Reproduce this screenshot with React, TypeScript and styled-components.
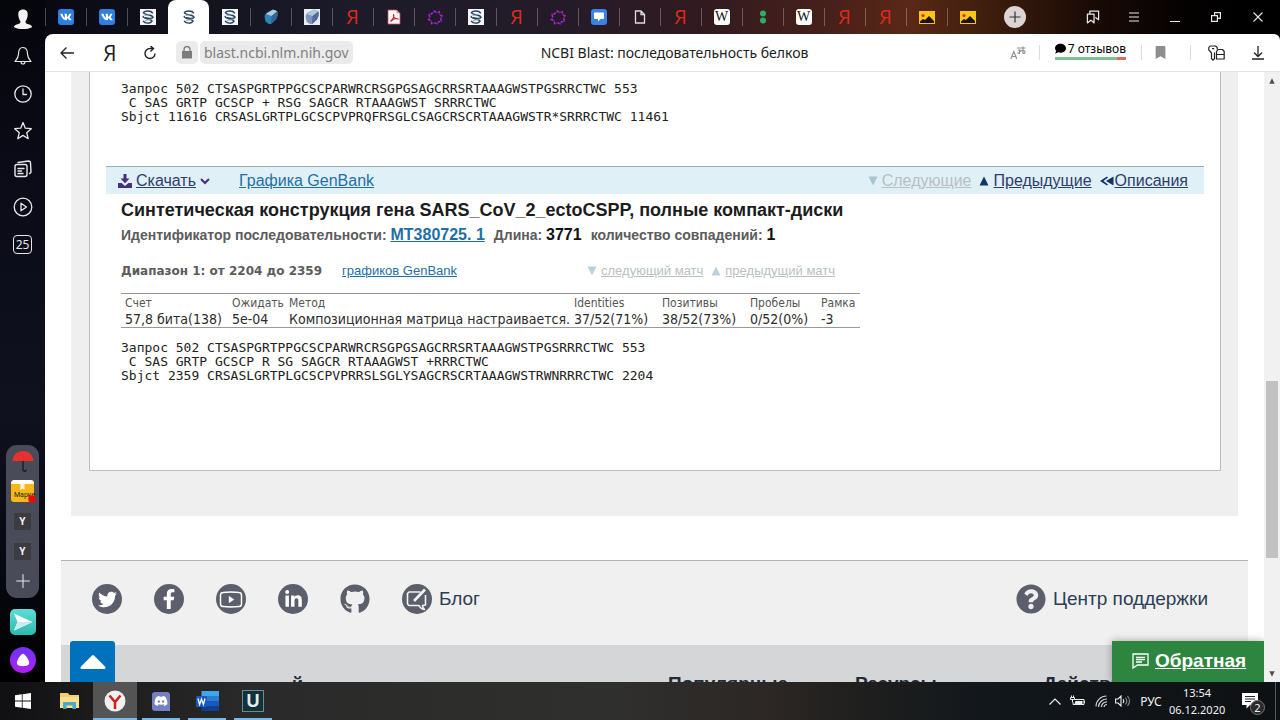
import React from 'react';
import styled, { createGlobalStyle, css } from 'styled-components';
import {
  FaTwitter,
  FaFacebookF,
  FaLinkedinIn,
  FaGithub,
  FaQuestionCircle,
  FaDiscord,
  FaVk,
  FaBookmark,
  FaComment,
} from 'react-icons/fa';

const ui = '"Noto Sans", "Open Sans", sans-serif';
const arial = '"Liberation Sans", Arial, sans-serif';
const verdana = '"DejaVu Sans", Verdana, sans-serif';
const tahoma = '"DejaVu Sans Condensed", Tahoma, sans-serif';
const narrow = '"Liberation Sans Narrow", "Arial Narrow", "Open Sans", sans-serif';

const GlobalStyle = createGlobalStyle`
  * { box-sizing: border-box; }
  body { margin: 0; background: #000; }
  button { border: 0; padding: 0; margin: 0; background: none; color: inherit; font: inherit; }
  svg { display: block; flex: none; }
`;

/* ---------- shell ---------- */

const Desktop = styled.div`
  height: 100vh;
  display: flex;
  flex-direction: column;
  overflow: hidden;
  font-family: ${ui};
`;

const Browser = styled.div`
  flex: 1;
  min-height: 0;
  display: flex;
  background: linear-gradient(90deg, #05050d 0%, #0d0d18 8%, #1c1b2a 27%, #241b28 44%, #301a20 54%, #48201a 65%, #5a2817 71%, #43200f 76%, #1b0b06 85%, #030101 93%, #000 100%);
`;

const Sidebar = styled.aside`
  width: 45px;
  flex: none;
  display: flex;
  flex-direction: column;
  align-items: center;
  color: #e8e8ec;
  background: linear-gradient(180deg, #05050c 0%, #0b0c18 30%, #10111f 60%, #080912 82%, #000 100%);
`;

const SideButton = styled.button`
  width: 44px;
  height: 37px;
  display: grid;
  place-items: center;
`;

const SideList = styled.nav`
  height: 226px;
  display: flex;
  flex-direction: column;
  ${SideButton} { flex: 1; height: auto; }
`;

const Dock = styled.div`
  width: 33px;
  margin-top: auto;
  padding: 1px 0 2px;
  border-radius: 11px;
  background: #4a4b58;
  display: flex;
  flex-direction: column;
  align-items: center;
  ${SideButton} { width: 33px; height: 30px; }
`;

const YTile = styled.span`
  width: 17px;
  height: 17px;
  display: grid;
  place-items: center;
  background: #3b3b40;
  color: #eee;
  font: bold 10px/17px ${ui};
`;

const AppTile = styled.button<{ $round?: boolean }>`
  width: 26px;
  height: 26px;
  margin: ${p => (p.$round ? '0 0 9px' : '11px 0 12px')};
  border-radius: ${p => (p.$round ? '50%' : '5px')};
  background: ${p => (p.$round ? 'linear-gradient(180deg, #6a35f5, #b31ff0)' : 'linear-gradient(180deg, #5cdcd8, #2fb9ae)')};
  display: grid;
  place-items: center;
`;

const Main = styled.div`
  flex: 1;
  min-width: 0;
  display: flex;
  flex-direction: column;
`;

/* ---------- tabs ---------- */

const TabStrip = styled.div`
  height: 34px;
  display: flex;
  align-items: flex-end;
`;

const Tab = styled.button<{ $active?: boolean; $bare?: boolean }>`
  flex: 0 1 41px;
  height: 34px;
  display: grid;
  place-items: center;
  position: relative;
  ${p =>
    p.$active
      ? css`background: #fff; border-radius: 8px 8px 0 0;`
      : !p.$bare &&
        css`
          &::before {
            content: '';
            position: absolute;
            left: 0;
            top: 8px;
            width: 1px;
            height: 18px;
            background: #ffffff44;
          }
        `}
`;

const Favicon = styled.span<{ $bg?: string; $square?: boolean }>`
  width: 16px;
  height: 16px;
  border-radius: ${p => (p.$bg && !p.$square ? '3px' : 0)};
  background: ${p => p.$bg || 'transparent'};
  color: #fff;
  display: grid;
  place-items: center;
`;

const YaGlyph = styled.span`
  color: #dc2b1e;
  font: 20px/20px ${narrow};
`;

const WikiGlyph = styled.span`
  color: #111;
  font: 14px/16px "Liberation Serif", serif;
`;

const NewTab = styled.button`
  width: 22px;
  height: 22px;
  margin: 0 auto 6px 16px;
  border-radius: 50%;
  background: #ddd5d3;
  display: grid;
  place-items: center;
`;

const WindowButtons = styled.div`
  height: 34px;
  display: flex;
  align-items: center;
  color: #e8e8e8;
`;

const WindowButton = styled.button<{ $w?: number }>`
  width: ${p => p.$w || 41}px;
  height: 34px;
  display: grid;
  place-items: center;
`;

/* ---------- address bar ---------- */

const AddressBar = styled.header`
  height: 38px;
  display: grid;
  grid-template-columns: 1fr auto 1fr;
  align-items: center;
  background: #fff;
  border-bottom: 1px solid #e4e4e4;
  border-radius: 8px 6px 0 0;
  color: #222;
`;

const AddressGroup = styled.div<{ $end?: boolean }>`
  display: flex;
  align-items: center;
  justify-content: ${p => (p.$end ? 'flex-end' : 'flex-start')};
`;

const ToolButton = styled.button<{ $w?: number }>`
  width: ${p => p.$w || 42}px;
  height: 30px;
  display: grid;
  place-items: center;
`;

const YaHome = styled.span`
  font: 21px/22px ${narrow};
`;

const Chip = styled.button<{ $text?: boolean }>`
  height: 23px;
  padding: ${p => (p.$text ? '0 4px' : 0)};
  width: ${p => (p.$text ? 'auto' : '22px')};
  margin-left: ${p => (p.$text ? '2px' : '7px')};
  border-radius: 5px;
  background: #ebebeb;
  color: #808080;
  font: 14px/23px ${ui};
  display: grid;
  place-items: center;
`;

const PageTitle = styled.div`
  margin-left: 24px;
  font: 14px/22px ${ui};
  color: #222;
  white-space: nowrap;
`;

const Divider = styled.span`
  width: 1px;
  height: 15px;
  background: #ddd;
`;

const SpacedDivider = styled(Divider)`
  margin: 0 5px 0 12px;
`;

const Reviews = styled.button`
  margin: 0 15px 5px;
  color: #000;
  font: 12px/16px ${ui};
  border-bottom: 3px solid;
  border-image: linear-gradient(90deg, #7fc096 0 86%, #e06a5c 86%) 1;
`;

const ReviewLabel = styled.span`
  display: flex;
  align-items: center;
  gap: 2px;
  height: 16px;
`;

/* ---------- page ---------- */

const Viewport = styled.div`
  flex: 1;
  min-height: 0;
  display: flex;
  background: #fff;
`;

const PageArea = styled.div`
  flex: 1;
  min-width: 0;
  position: relative;
  overflow: hidden;
`;

const Results = styled.main`
  margin: 0 26px 44px;
  padding: 0 17px 45px 18px;
  background: #efefef;
`;

const Sheet = styled.section`
  padding: 10px 16px 87px;
  background: #fff;
  border: 1px solid #bdbdbd;
  border-top: 0;
`;

const Sequence = styled.pre`
  margin: 0 0 0 15px;
  font: 13px/14px "DejaVu Sans Mono", monospace;
  color: #222;
`;

const ActionBar = styled.nav`
  height: 28px;
  margin-top: 42px;
  padding: 0 16px 0 12px;
  display: flex;
  align-items: center;
  border-top: 1px solid #93b0b8;
  background: #e0f0f7;
  font: 16px/20px ${arial};
`;

const Link = styled.a<{ $tone?: 'dark' | 'muted' }>`
  color: ${p => (p.$tone === 'dark' ? '#2f3d6b' : p.$tone === 'muted' ? '#b9bfc2' : '#1f6fa5')};
  text-decoration: underline;
  white-space: nowrap;
`;

const Item = styled.span<{ $gap?: number; $ml?: string }>`
  display: inline-flex;
  align-items: center;
  gap: ${p => p.$gap ?? 4}px;
  margin-left: ${p => p.$ml || '0'};
`;

const Entry = styled.article`
  padding-left: 15px;
`;

const EntryTitle = styled.h2`
  margin: 5px 0 0;
  font: bold 18px/22px ${arial};
  color: #1c1c1c;
`;

const Meta = styled.p`
  margin: 3px 0 0;
  display: flex;
  gap: 9px;
  font: bold 14px/22px ${arial};
  color: #5c5c5c;
  a, b { font-size: 16px; }
  b { color: #111; }
`;

const RangeRow = styled.div`
  height: 20px;
  width: 714px;
  max-width: 100%;
  margin: 15px 0 12px;
  display: flex;
  align-items: center;
  font: 13px/20px ${arial};
`;

const RangeTitle = styled.h3`
  margin: 0 20px 0 0;
  font: bold 12px/20px ${verdana};
  color: #5c5c5c;
`;

const Scores = styled.table`
  width: 739px;
  max-width: 100%;
  margin-bottom: 13px;
  table-layout: fixed;
  border-collapse: separate;
  border-spacing: 0;
  border-top: 1px solid #999;
  border-bottom: 1px solid #999;
  font: 14px/16px ${tahoma};
  color: #2b2b2b;
  white-space: nowrap;
  th { padding: 1px 0 0 4px; text-align: left; font-weight: normal; font-size: 12px; color: #555; }
  td { padding: 0 0 0 4px; }
`;

const Col = styled.col<{ $w: number }>`
  width: ${p => p.$w}px;
`;

/* ---------- footer ---------- */

const Footer = styled.footer`
  margin: 0 16px;
  border-top: 1px solid #b4b4b4;
  background: #f0f0f0;
`;

const SocialRow = styled.div`
  height: 84px;
  padding: 0 40px 8px 31px;
  display: flex;
  align-items: center;
  gap: 32px;
  font: 19px/24px ${arial};
`;

const RoundLink = styled.a<{ $end?: boolean }>`
  display: flex;
  align-items: center;
  gap: 7px;
  margin-left: ${p => (p.$end ? 'auto' : 0)};
  color: #2c3e54;
  text-decoration: none;
`;

const Disc = styled.span`
  width: 30px;
  height: 30px;
  border-radius: 50%;
  background: #5c5f6b;
  color: #fff;
  display: grid;
  place-items: center;
`;

const FooterColumns = styled.div`
  height: 80px;
  padding: 27px 0 0 231px;
  display: grid;
  grid-template-columns: 376fr 187fr 188fr 205fr;
  background: #d5d6d7;
  font: bold 19px/24px ${arial};
  color: #222c38;
`;

const FooterHead = styled.h4<{ $small?: boolean }>`
  margin: 0;
  font-size: ${p => (p.$small ? '18px' : 'inherit')};
`;

const ToTop = styled.button`
  position: absolute;
  left: 25px;
  bottom: 0;
  width: 45px;
  height: 41px;
  border-radius: 3px 3px 0 0;
  background: #0071bc;
  display: grid;
  place-items: center;
`;

const Feedback = styled.a`
  position: absolute;
  right: 0;
  bottom: 0;
  height: 41px;
  width: 152px;
  padding: 0 0 1px 20px;
  display: flex;
  align-items: center;
  gap: 6px;
  background: #2e8540;
  box-shadow: 0 0 8px #00000055;
  color: #fff;
  font: bold 19px/24px ${arial};
`;

const ScrollRail = styled.div`
  width: 16px;
  display: flex;
  flex-direction: column;
  align-items: center;
  background: #f1f1f1;
`;

const RailPart = styled.div<{ $grow: number; $thumb?: boolean }>`
  flex: ${p => p.$grow};
  width: 12px;
  background: ${p => (p.$thumb ? '#c1c1c1' : 'transparent')};
`;

const RailButton = styled.button`
  width: 16px;
  height: 17px;
  display: grid;
  place-items: center;
`;

/* ---------- taskbar ---------- */

const Taskbar = styled.footer`
  height: 38px;
  flex: none;
  display: flex;
  align-items: stretch;
  color: #f2f2f2;
  background: linear-gradient(90deg, #101012 0%, #1b1b1c 7%, #2a2a2a 20%, #2f2f2d 48%, #2c2725 60%, #1f1f1e 67%, #12171b 77%, #0e1114 100%);
`;

const TaskButton = styled.button<{ $state?: 'open' | 'active' }>`
  width: 46px;
  position: relative;
  display: grid;
  place-items: center;
  background: ${p => (p.$state === 'active' ? 'linear-gradient(#545454, #545454) center / 44px 100% no-repeat' : 'none')};
  &::after {
    content: '';
    position: absolute;
    bottom: 0;
    left: ${p => (p.$state === 'active' ? '1px' : '4px')};
    right: ${p => (p.$state === 'active' ? '1px' : '4px')};
    height: ${p => (p.$state ? '2px' : 0)};
    background: #76b9ed;
  }
`;

const Tray = styled.div`
  margin-left: auto;
  display: flex;
  align-items: center;
  font: 12px/17px ${ui};
`;

const TrayButton = styled.button<{ $w: number }>`
  width: ${p => p.$w}px;
  height: 38px;
  display: grid;
  place-items: center;
`;

const Clock = styled.div`
  width: 56px;
  text-align: center;
  font: 11px/17px ${ui};
  white-space: nowrap;
`;

const NoticeWrap = styled.span`
  position: relative;
`;

const Badge = styled.span`
  position: absolute;
  left: 8px;
  top: 7px;
  width: 15px;
  height: 15px;
  border: 1px solid #777;
  border-radius: 50%;
  background: #2a2a2c;
  font: 11px/13px ${ui};
  text-align: center;
`;

const PeekLine = styled.span`
  width: 1px;
  height: 38px;
  margin-right: 4px;
  background: #55585a;
`;

const CountBox = styled.span`
  width: 19px;
  height: 19px;
  border: 1px solid #e8e8ec;
  border-radius: 4px;
  font: 12px/17px ${ui};
  text-align: center;
`;

const DiscordTile = styled.span`
  width: 18px;
  height: 19px;
  border-radius: 3px 3px 0 3px;
  background: #7480c2;
  color: #fff;
  display: grid;
  place-items: center;
`;

const UTile = styled.span`
  width: 22px;
  height: 22px;
  border: 1px solid #6d8a90;
  background: #12323b;
  color: #e6eceb;
  font: bold 18px/20px ${arial};
  text-align: center;
`;

/* ---------- icons ---------- */

const Line: React.FC<{ size?: number; w?: number; children: React.ReactNode }> = ({ size = 20, w = 1.3, children }) => (
  <svg width={size} height={size} viewBox="0 0 20 20" fill="none" stroke="currentColor" strokeWidth={w} strokeLinecap="round" strokeLinejoin="round" aria-hidden>
    {children}
  </svg>
);

const Helix = () => (
  <svg width="16" height="16" viewBox="0 0 16 16" fill="none" strokeLinecap="round" aria-hidden>
    <path d="M12.500 3.800C11 1.300 5 1.300 3.500 3.500C3 6 12.500 5.500 13 8.200C12.500 10 8 9.500 5.500 8.800" stroke="#24425e" strokeWidth="1.500" />
    <path d="M3.200 7.500C3.500 10.500 11.500 9.500 12 12.200C10.500 15 5 14.500 3.500 12.300" stroke="#24425e" strokeWidth="1.500" />
    <path d="M5 6.600L11 5.200M5 11.800L11 10" stroke="#8fa6b8" strokeWidth="0.900" />
  </svg>
);

const Cube = ({ color }: { color: string }) => (
  <svg width="16" height="16" viewBox="0 0 16 16" aria-hidden>
    <path d="M1.500 7Q2 5 4 3.500L9.500 .8Q12 .3 14.500 2.500Q15.500 6 13 10.500L8 15.300Q4.500 15 2.500 12.500Z" fill={color} />
    <path d="M3 5L9.500 .8Q12 .5 14 2.300L8.500 7Z" fill="#b2c9dc" />
    <path d="M8.500 7L14.500 2.500Q15.500 6 13 10.500L8 15.300Z" fill="#2e4f86" opacity=".6" />
  </svg>
);

const Pdf = () => (
  <svg width="14" height="16" viewBox="0 0 14 16" aria-hidden>
    <path d="M1 1h8.500L13 4.500V15H1z" fill="#fff" stroke="#d94a4a" strokeWidth="0.800" />
    <path d="M9.500 1L13 4.500H9.500z" fill="#d99" />
    <path d="M3.500 12.500C6 10 7.500 7 6.500 5.500C5.500 7.500 8.500 10.500 11 10C9 9 6 10 3.500 12.500Z" fill="none" stroke="#c8202a" strokeWidth="1.100" />
  </svg>
);

const gearPath = 'M9 2l2 2 3-1 0.500 3 2.500 1.500-1.500 2.500 1 3-3 0.500-1.500 2.500-3-1.500-3 1-0.500-3-3-1.500 1.500-2.500-1-3 3-0.500z';

const Gear = () => (
  <svg width="17" height="17" viewBox="0 0 18 18" fill="none" aria-hidden>
    <path d={gearPath} stroke="#4b1fd0" strokeWidth="1.500" />
    <path d={gearPath} stroke="#e0246b" strokeWidth="1.500" strokeDasharray="2 3" />
  </svg>
);

const ChatBubble = () => (
  <svg width="10" height="10" viewBox="0 0 10 10" aria-hidden>
    <path d="M1 0.500h8a1 1 0 0 1 1 1v4.500a1 1 0 0 1-1 1H6.500L4 9.500V7H1a1 1 0 0 1-1-1V1.500a1 1 0 0 1 1-1z" fill="#fff" />
  </svg>
);

const Doc = () => (
  <svg width="12" height="14" viewBox="0 0 12 14" fill="none" stroke="#ddd" strokeWidth="1.300" aria-hidden>
    <path d="M1.500 1h5.500l3.500 3.500V13h-9zM7 1v3.500h3.500" />
  </svg>
);

const Dots = () => (
  <svg width="8" height="14" viewBox="0 0 8 14" fill="#2fae62" aria-hidden>
    <circle cx="4" cy="3.500" r="3" />
    <circle cx="4" cy="10.500" r="3" />
  </svg>
);

const Picture = () => (
  <svg width="16" height="13" viewBox="0 0 16 13" aria-hidden>
    <path d="M0 0h16v13H0z" fill="#fcc419" />
    <circle cx="4" cy="4.500" r="1.600" fill="#d6281d" />
    <path d="M1 12V10.500L4 8l2 1 4-4 5 5v2z" fill="#1a1208" />
  </svg>
);

const Triangle = ({ up, color, size = 10 }: { up?: boolean; color: string; size?: number }) => (
  <svg width={size} height={size} viewBox="0 0 10 10" fill={color} aria-hidden>
    <path d={up ? 'M5 0.500L9.500 9.500H0.500z' : 'M0.500 0.500h9L5 9.500z'} />
  </svg>
);

const favicons: Record<string, React.ReactNode> = {
  vk: <Favicon $bg="#2f7fe0"><FaVk size={12} /></Favicon>,
  blast: <Favicon $square $bg="#f4f6f7"><Helix /></Favicon>,
  cube: <Favicon><Cube color="#2f86b4" /></Favicon>,
  cubeBox: <Favicon $square $bg="#e9ecf2"><Cube color="#7f93bd" /></Favicon>,
  ya: <YaGlyph>Я</YaGlyph>,
  pdf: <Pdf />,
  gear: <Gear />,
  chat: <Favicon $bg="#3a83e4"><ChatBubble /></Favicon>,
  doc: <Doc />,
  wiki: <Favicon $bg="#fff"><WikiGlyph>W</WikiGlyph></Favicon>,
  dots: <Dots />,
  pic: <Picture />,
};

const tabs = ['vk', 'vk', 'blast', 'blast', 'blast', 'cube', 'cubeBox', 'ya', 'pdf', 'gear', 'blast', 'ya', 'gear', 'chat', 'doc', 'ya', 'wiki', 'dots', 'wiki', 'ya', 'ya', 'pic', 'pic'];
const ACTIVE = 3;

const firstSequence = `Запрос 502 CTSASPGRTPPGCSCPARWRCRSGPGSAGCRRSRTAAAGWSTPGSRRCTWC 553
 C SAS GRTP GCSCP + RSG SAGCR RTAAAGWST SRRRCTWC
Sbjct 11616 CRSASLGRTPLGCSCPVPRQFRSGLCSAGCRSCRTAAAGWSTR*SRRRCTWC 11461`;

const secondSequence = `Запрос 502 CTSASPGRTPPGCSCPARWRCRSGPGSAGCRRSRTAAAGWSTPGSRRRCTWC 553
 C SAS GRTP GCSCP R SG SAGCR RTAAAGWST +RRRCTWC
Sbjct 2359 CRSASLGRTPLGCSCPVPRRSLSGLYSAGCRSCRTAAAGWSTRWNRRRCTWC 2204`;

const columns: [string, string, number][] = [
  ['Счет', '57,8 бита(138)', 107],
  ['Ожидать', '5e-04', 57],
  ['Метод', 'Композиционная матрица настраивается.', 285],
  ['Identities', '37/52(71%)', 88],
  ['Позитивы', '38/52(73%)', 88],
  ['Пробелы', '0/52(0%)', 71],
  ['Рамка', '-3', 43],
];

function SideRail() {
  return (
    <Sidebar>
      <SideButton aria-label="Профиль">
        <svg width="20" height="20" viewBox="0 0 20 20" fill="#f2f2f2" aria-hidden>
          <path d="M10 0.500c3.500 0 5 2.300 4.700 5.500-.2 3-1.200 5-2.200 6.200 0 2 .5 2.300 3 3 2.500.7 3.500 1.500 3.500 3-2.500 1.300-5.500 1.800-9 1.800s-6.500-.5-9-1.800c0-1.500 1-2.300 3.500-3 2.500-.7 3-1 3-3C6.500 11 5.500 9 5.300 6 5 2.800 6.500.500 10 .500z" />
        </svg>
      </SideButton>
      <SideList>
        <SideButton aria-label="Уведомления"><Line w={1.2}><path d="M10 1.500c-3.500 0-4.500 3-4.500 6.500 0 3.500-1.500 5-3.500 7.500h16c-2-2.500-3.500-4-3.500-7.500 0-3.500-1-6.500-4.500-6.500zM8 15.500a2 2.500 0 0 0 4 0" /></Line></SideButton>
        <SideButton aria-label="История"><Line><circle cx="10" cy="10" r="8.200" /><path d="M10 5v5.500h3.500" /></Line></SideButton>
        <SideButton aria-label="Избранное"><Line><path d="M10 1.500l2.300 5.700 6 .5-4.600 4 1.500 6L10 14.400 4.800 17.700l1.500-6-4.600-4 6-.5z" /></Line></SideButton>
        <SideButton aria-label="Коллекции"><Line w={1.4}><rect x="2" y="5.500" width="12" height="12" rx="2" /><path d="M5 3.500l10.500-1.500a2 2 0 0 1 2 2l.5 9a2 2 0 0 1-1.500 1.500M5 9.500h6M5 12h3.500M5 14.500h5" /></Line></SideButton>
        <SideButton aria-label="Видео"><Line><circle cx="10" cy="10" r="8.800" /><path d="M8 6.200l5.500 3.800L8 13.800z" /></Line></SideButton>
        <SideButton aria-label="Счётчик 25"><CountBox>25</CountBox></SideButton>
      </SideList>
      <Dock>
        <SideButton aria-label="Погода">
          <svg width="22" height="22" viewBox="0 0 22 22" aria-hidden>
            <path d="M0.500 11C1 5 5 1 11 1s10 4 10.500 10z" fill="#e8302f" />
            <path d="M11 11v8.500a1.700 1.700 0 0 0 3.400 0" fill="none" stroke="#1b1b22" strokeWidth="1.400" />
          </svg>
        </SideButton>
        <SideButton aria-label="Маркет">
          <svg width="26" height="24" viewBox="0 0 26 24" aria-hidden>
            <rect x="1" y="1" width="23" height="22" rx="3" fill="#f7b818" />
            <path d="M1 5a4 4 0 0 1 4-4h15a4 4 0 0 1 4 4z" fill="#fff" />
            <path d="M10.500 4h4v7l-2-1.500-2 1.500z" fill="#fff4dc" />
            <text x="4" y="18" fontSize="7" fontFamily="Liberation Sans Narrow, Roboto, sans-serif" fill="#222">Марке</text>
            <circle cx="22" cy="20" r="3.800" fill="#e80c0c" />
          </svg>
        </SideButton>
        <SideButton aria-label="Y"><YTile>Y</YTile></SideButton>
        <SideButton aria-label="Y"><YTile>Y</YTile></SideButton>
        <SideButton aria-label="Добавить"><Line size={16}><path d="M10 2v16M2 10h16" /></Line></SideButton>
      </Dock>
      <AppTile aria-label="Мессенджер">
        <svg width="20" height="18" viewBox="0 0 20 18" aria-hidden>
          <path d="M1 0.500L19.500 9L1 17.500L4.500 9z" fill="#fff" />
          <path d="M1 17.500L4.500 9H19.500z" fill="#c5efec" />
        </svg>
      </AppTile>
      <AppTile $round aria-label="Алиса">
        <svg width="14" height="14" viewBox="0 0 14 14" fill="#fff" aria-hidden>
          <path d="M7 .8c2 0 6.200 6.500 6.200 9 0 2.600-3 3.400-6.200 3.400S.8 12.400.8 9.800C.8 7.300 5 .8 7 .8z" />
        </svg>
      </AppTile>
    </Sidebar>
  );
}

function TopBar() {
  return (
    <>
      <TabStrip>
        {tabs.map((t, i) => (
          <Tab key={i} $active={i === ACTIVE} $bare={i === ACTIVE + 1} aria-label={`Вкладка ${i + 1}`}>
            {i === ACTIVE ? <Favicon><Helix /></Favicon> : favicons[t]}
          </Tab>
        ))}
        <NewTab aria-label="Новая вкладка">
          <svg width="12" height="12" viewBox="0 0 12 12" stroke="#333" strokeWidth="1.200" aria-hidden><path d="M6 .5v11M.5 6h11" /></svg>
        </NewTab>
        <WindowButtons>
          <WindowButton aria-label="Закладки"><Line size={14} w={1.8}><path d="M2 6h9.500v12.500L7 14.500 2 18.500zM5.500 5.500v-4h12.500V14l-4-3" /></Line></WindowButton>
          <WindowButton aria-label="Меню"><svg width="10" height="10" viewBox="0 0 10 10" stroke="#e8e8e8" aria-hidden><path d="M0 1h10M0 5h10M0 9h10" strokeWidth="1.200" /></svg></WindowButton>
          <WindowButton aria-label="Свернуть"><svg width="10" height="10" viewBox="0 0 10 10" stroke="#e8e8e8" aria-hidden><path d="M0 9.500h10" /></svg></WindowButton>
          <WindowButton aria-label="Восстановить"><svg width="10" height="10" viewBox="0 0 10 10" fill="none" stroke="#e8e8e8" strokeWidth="1.200" aria-hidden><path d="M.6 3.600h5.800v5.800H.6zM3.600 3.600V.6h5.800v5.800h-3" /></svg></WindowButton>
          <WindowButton $w={44} aria-label="Закрыть"><svg width="10" height="10" viewBox="0 0 10 10" stroke="#e8e8e8" strokeWidth="1.100" aria-hidden><path d="M.5.5l9 9M9.500.5l-9 9" /></svg></WindowButton>
        </WindowButtons>
      </TabStrip>
      <AddressBar>
        <AddressGroup>
          <ToolButton $w={44} aria-label="Назад"><svg width="14" height="12" viewBox="0 0 14 12" fill="none" stroke="#222" strokeWidth="1.300" aria-hidden><path d="M14 6H1M6.500.5L1 6l5.500 5.500" /></svg></ToolButton>
          <ToolButton aria-label="Яндекс"><YaHome>Я</YaHome></ToolButton>
          <ToolButton $w={38} aria-label="Обновить"><svg width="14" height="14" viewBox="0 0 14 14" fill="none" stroke="#222" strokeWidth="1.400" aria-hidden><path d="M12 7.500A5 5 0 1 1 7 2.500h3M7.500 0l3 2.500-3 3" /></svg></ToolButton>
          <Chip aria-label="Защищено"><svg width="10" height="13" viewBox="0 0 10 13" aria-hidden><path d="M0 5h10v7.500H0z" fill="#7c7c7c" /><path d="M2 5.500V3.500a3 3 0 0 1 6 0v2" fill="none" stroke="#7c7c7c" strokeWidth="1.400" /></svg></Chip>
          <Chip $text>blast.ncbi.nlm.nih.gov</Chip>
        </AddressGroup>
        <PageTitle>NCBI Blast: последовательность белков</PageTitle>
        <AddressGroup $end>
          <ToolButton aria-label="Перевести">
            <svg width="16" height="14" viewBox="0 0 16 14" fill="none" stroke="#8c8c8c" strokeWidth="1.100" aria-hidden>
              <path d="M.8 13l3-7.500 3 7.500M2 10.500h3.800M7 2h8.500M8 4h2.500M9.500 4v3.500c-1 0-1.500-.5-2-1M13 .5v7.500M10 5.500c2-1.500 5-1.500 5 .5s-2 1.500-2 1.500" />
            </svg>
          </ToolButton>
          <Divider />
          <Reviews><ReviewLabel><FaComment size={11} />7 отзывов</ReviewLabel></Reviews>
          <Divider />
          <ToolButton $w={36} aria-label="В закладки"><FaBookmark size={13} color="#8e8e8e" /></ToolButton>
          <SpacedDivider />
          <ToolButton $w={40} aria-label="Пароли">
            <svg width="17" height="16" viewBox="0 0 17 16" fill="none" stroke="#222" strokeWidth="1.200" strokeLinejoin="round" aria-hidden>
              <path d="M2 1h5.500L9.200 2.500V4.500M6.500 7.500v6L5 15.200 3.500 13.500V8L.8 4.800V2.500L2 1M4 3.600h2.200" />
              <path d="M8.500 6.500L10 4.500h4.500L16.200 6.500V14H8.500zM8.500 9.500h7.700" />
            </svg>
          </ToolButton>
          <ToolButton $w={44} aria-label="Загрузки"><svg width="12" height="14" viewBox="0 0 12 14" fill="none" stroke="#222" strokeWidth="1.300" aria-hidden><path d="M6 0v10M2 6.500l4 4 4-4M0 13h12" /></svg></ToolButton>
        </AddressGroup>
      </AddressBar>
    </>
  );
}

function BlastPage() {
  return (
    <PageArea>
      <Results>
        <Sheet>
          <Sequence>{firstSequence}</Sequence>
          <ActionBar>
            <Item>
              <svg width="14" height="14" viewBox="0 0 14 14" fill="#46307c" aria-hidden>
                <path d="M5.500 0h3v4.500H11.500L7 9.300 2.500 4.500h3z" />
                <path d="M0 9h3.500L7 12l3.500-3H14v5H0z" />
              </svg>
              <Link $tone="dark" href="#download">Скачать</Link>
              <svg width="10" height="8" viewBox="0 0 10 8" fill="none" stroke="#46307c" strokeWidth="2" aria-hidden><path d="M1 2l4 4 4-4" /></svg>
            </Item>
            <Item $ml="29px"><Link href="#graphics">Графика GenBank</Link></Item>
            <Item $ml="auto"><Triangle color="#a9c3cf" /><Link $tone="muted" href="#next">Следующие</Link></Item>
            <Item $ml="8px"><Triangle up color="#0d3565" /><Link $tone="dark" href="#prev">Предыдущие</Link></Item>
            <Item $ml="8px" $gap={1}>
              <svg width="14" height="10" viewBox="0 0 14 10" fill="#0d3565" aria-hidden><path d="M13.500.5v9L6 5zM7 .5L8 1.500 3.500 5l4.500 3.500-1 1L0 5z" /></svg>
              <Link $tone="dark" href="#descr">Описания</Link>
            </Item>
          </ActionBar>
          <Entry>
            <EntryTitle>Синтетическая конструкция гена SARS_CoV_2_ectoCSPP, полные компакт-диски</EntryTitle>
            <Meta>
              <span>Идентификатор последовательности: <Link href="#id">MT380725. 1</Link></span>
              <span>Длина: <b>3771</b></span>
              <span>количество совпадений: <b>1</b></span>
            </Meta>
            <RangeRow>
              <RangeTitle>Диапазон 1: от 2204 до 2359</RangeTitle>
              <Link href="#gb">графиков GenBank</Link>
              <Item $ml="auto"><Triangle color="#bccfd9" /><Link $tone="muted" href="#nextmatch">следующий матч</Link></Item>
              <Item $ml="8px"><Triangle up color="#bccfd9" /><Link $tone="muted" href="#prevmatch">предыдущий матч</Link></Item>
            </RangeRow>
            <Scores>
              <colgroup>{columns.map(c => <Col key={c[0]} $w={c[2]} />)}</colgroup>
              <thead><tr>{columns.map(c => <th key={c[0]} scope="col">{c[0]}</th>)}</tr></thead>
              <tbody><tr>{columns.map(c => <td key={c[0]}>{c[1]}</td>)}</tr></tbody>
            </Scores>
          </Entry>
          <Sequence>{secondSequence}</Sequence>
        </Sheet>
      </Results>
      <Footer>
        <SocialRow>
          <RoundLink href="#tw" aria-label="Twitter"><Disc><FaTwitter size={19} /></Disc></RoundLink>
          <RoundLink href="#fb" aria-label="Facebook"><Disc><FaFacebookF size={20} /></Disc></RoundLink>
          <RoundLink href="#yt" aria-label="YouTube">
            <Disc>
              <svg width="24" height="17" viewBox="0 0 24 17" fill="none" stroke="#fff" strokeWidth="1.500" aria-hidden>
                <path d="M4 1.500q8-.8 16 0q2.500 0 2.500 2.800v8.400q0 2.800-2.500 2.800q-8 .8-16 0q-2.500 0-2.500-2.800V4.300q0-2.800 2.500-2.800z" />
                <path d="M9.800 4.800v7.400l5.400-3.700z" fill="#fff" stroke="none" />
              </svg>
            </Disc>
          </RoundLink>
          <RoundLink href="#in" aria-label="LinkedIn"><Disc><FaLinkedinIn size={19} /></Disc></RoundLink>
          <RoundLink href="#gh" aria-label="GitHub"><FaGithub size={30} color="#5c5f6b" /></RoundLink>
          <RoundLink href="#blog">
            <Disc>
              <svg width="24" height="24" viewBox="0 0 24 24" fill="none" stroke="#f4f4f4" strokeWidth="1.600" strokeLinejoin="round" aria-hidden>
                <path d="M15.500 5H4L2.500 6.500V17L4 18.500H14q1.500 3.500 5.500 4-2-2-2-4l3-.5V8" />
                <path d="M20 2.500L9 14" strokeWidth="2.600" />
              </svg>
            </Disc>
            Блог
          </RoundLink>
          <RoundLink $end href="#help"><FaQuestionCircle size={30} color="#5c5f6b" />Центр поддержки</RoundLink>
        </SocialRow>
        <FooterColumns>
          <FooterHead $small>й</FooterHead>
          <FooterHead>Популярные</FooterHead>
          <FooterHead>Ресурсы</FooterHead>
          <FooterHead>Действия</FooterHead>
        </FooterColumns>
      </Footer>
      <ToTop aria-label="Наверх">
        <svg width="26" height="16" viewBox="0 0 26 16" fill="#fff" aria-hidden><path d="M12 1.500q1-1 2 0l11 11q1.500 2.500-1 2.500H2q-2.500 0-1-2.500z" /></svg>
      </ToTop>
      <Feedback href="#feedback">
        <svg width="17" height="16" viewBox="0 0 17 16" fill="none" stroke="#fff" strokeWidth="1.300" aria-hidden>
          <path d="M1 1h15v11H5.500L1 15zM4 4.500h9M4 6.700h9M4 9h6" />
        </svg>
        Обратная
      </Feedback>
    </PageArea>
  );
}

function Scroller() {
  return (
    <ScrollRail>
      <RailButton aria-label="Вверх"><Triangle up size={6} color="#505050" /></RailButton>
      <RailPart $grow={292} />
      <RailPart $grow={177} $thumb />
      <RailPart $grow={107} />
      <RailButton aria-label="Вниз"><Triangle size={6} color="#505050" /></RailButton>
    </ScrollRail>
  );
}

function WindowsTaskbar() {
  return (
    <Taskbar>
      <TaskButton aria-label="Пуск">
        <svg width="16" height="16" viewBox="0 0 16 16" fill="#fff" aria-hidden><path d="M0 2.300L6.800 1.300V7.600H0zM7.600 1.200L16 0v7.600H7.600zM0 8.400h6.800v6.300L0 13.700zM7.600 8.400H16V16l-8.400-1.200z" /></svg>
      </TaskButton>
      <TaskButton aria-label="Проводник">
        <svg width="21" height="18" viewBox="0 0 21 18" aria-hidden>
          <path d="M1 1h8l1.500 2H20v13H1z" fill="#f5cf68" />
          <path d="M1 5h19v11H1z" fill="#fde08c" />
          <path d="M4 10h13v7h-3.500v-3.500h-6V17H4z" fill="#4aa9cf" />
        </svg>
      </TaskButton>
      <TaskButton $state="active" aria-label="Яндекс.Браузер">
        <svg width="22" height="22" viewBox="0 0 22 22" fill="none" aria-hidden>
          <circle cx="11" cy="11" r="10.500" fill="#f1f0f0" />
          <path d="M5.500 5.500L11 12l5.500-6.500M11 12v7" stroke="#cc1f1f" strokeWidth="2.500" />
        </svg>
      </TaskButton>
      <TaskButton $state="open" aria-label="Discord"><DiscordTile><FaDiscord size={14} /></DiscordTile></TaskButton>
      <TaskButton $state="open" aria-label="Word">
        <svg width="23" height="20" viewBox="0 0 23 20" aria-hidden>
          <path d="M5.500 0H23v5H5.500z" fill="#41a5ee" />
          <path d="M5.500 5H23v5H5.500z" fill="#2b7cd3" />
          <path d="M5.500 10H23v5H5.500z" fill="#185abd" />
          <path d="M5.500 15H23v5H5.500z" fill="#103f91" />
          <rect x="0" y="5" width="11" height="11" rx="1" fill="#185abd" />
          <path d="M2 7.500l1.600 6 1.900-5.500 1.900 5.500L9 7.500" fill="none" stroke="#fff" strokeWidth="1.300" />
        </svg>
      </TaskButton>
      <TaskButton $state="open" aria-label="U"><UTile>U</UTile></TaskButton>
      <Tray>
        <TrayButton $w={24} aria-label="Скрытые значки"><svg width="12" height="7" viewBox="0 0 12 7" fill="none" stroke="#eee" strokeWidth="1.200" aria-hidden><path d="M.5 6.500L6 1l5.500 5.500" /></svg></TrayButton>
        <TrayButton $w={22} aria-label="Питание">
          <svg width="16" height="12" viewBox="0 0 16 12" fill="none" stroke="#eee" aria-hidden><path d="M5 4.500h9v5H3V7M14.500 6v2M1.500.5v2M3.500.5v2M.5 2.500h4v2h-4zM2.500 5v2" /><path d="M5.500 6h7v3H4.500z" fill="#eee" stroke="none" /></svg>
        </TrayButton>
        <TrayButton $w={24} aria-label="Сеть">
          <svg width="13" height="13" viewBox="0 0 13 13" fill="none" stroke="#ccc" strokeWidth="1.200" aria-hidden><path d="M1 11.500A10.500 10.500 0 0 1 11.500 1M3.500 12A8.500 8.500 0 0 1 12 4M6.300 12A6 6 0 0 1 12 6.800M9 12A3 3 0 0 1 12 9.500" /></svg>
        </TrayButton>
        <TrayButton $w={20} aria-label="Звук">
          <svg width="16" height="12" viewBox="0 0 16 12" fill="none" stroke="#eee" strokeWidth="1.100" aria-hidden><path d="M.6 4h2.500L6 1v10L3.100 8H.6zM8 4q1.500 2 0 4" /><path d="M10.300 2.500q3 3.500 0 7M12.500 1q4 5 0 10" stroke="#888" /></svg>
        </TrayButton>
        <TrayButton $w={36}>РУС</TrayButton>
        <Clock>13:54<br />06.12.2020</Clock>
        <TrayButton $w={50} aria-label="Уведомления">
          <NoticeWrap>
            <svg width="16" height="16" viewBox="0 0 16 16" aria-hidden><path d="M0 0h16v12H8l-3.500 3.500V12H0z" fill="#fff" /><path d="M3 3.500h10M3 6h10M3 8.500h6" stroke="#222" /></svg>
            <Badge>2</Badge>
          </NoticeWrap>
        </TrayButton>
        <PeekLine />
      </Tray>
    </Taskbar>
  );
}

export default function App() {
  return (
    <Desktop>
      <GlobalStyle />
      <Browser>
        <SideRail />
        <Main>
          <TopBar />
          <Viewport>
            <BlastPage />
            <Scroller />
          </Viewport>
        </Main>
      </Browser>
      <WindowsTaskbar />
    </Desktop>
  );
}
